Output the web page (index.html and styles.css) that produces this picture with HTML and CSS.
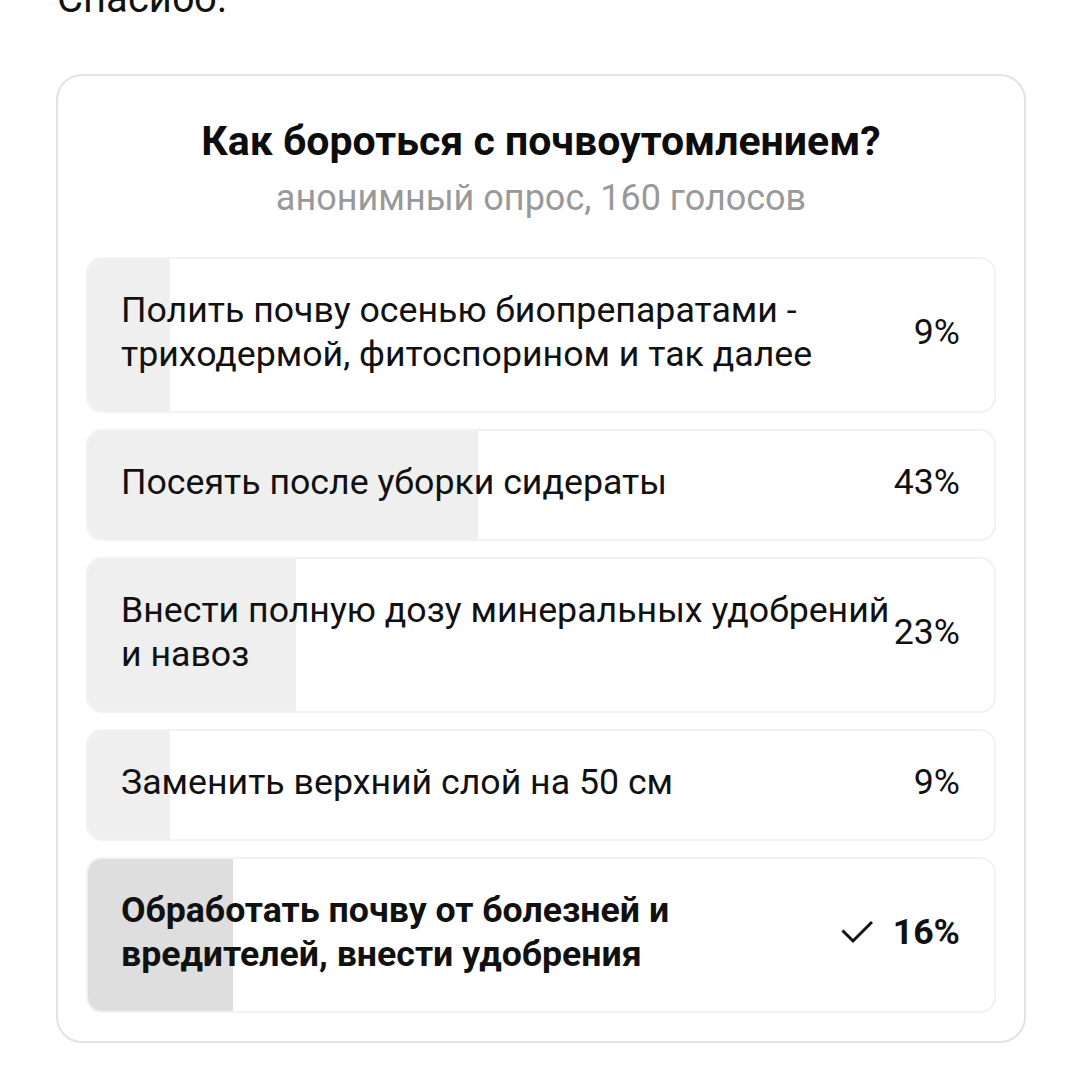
FILE: index.html
```html
<!DOCTYPE html>
<html lang="ru">
<head>
<meta charset="utf-8">
<link rel="stylesheet" href="styles.css">
</head>
<body>
<p class="thanks">Спасибо.</p>
<div class="poll">
  <div class="poll-head">
    <h2 class="poll-title">Как бороться с почвоутомлением?</h2>
    <div class="poll-sub">анонимный опрос, 160 голосов</div>
  </div>
  <div class="options">
    <div class="option">
      <div class="fill" style="width:9%"></div>
      <div class="opt-text">Полить почву осенью биопрепаратами - триходермой, фитоспорином и так далее</div>
      <div class="opt-pct">9%</div>
    </div>
    <div class="option">
      <div class="fill" style="width:43%"></div>
      <div class="opt-text">Посеять после уборки сидераты</div>
      <div class="opt-pct">43%</div>
    </div>
    <div class="option">
      <div class="fill" style="width:23%"></div>
      <div class="opt-text">Внести полную дозу минеральных удобрений и навоз</div>
      <div class="opt-pct">23%</div>
    </div>
    <div class="option">
      <div class="fill" style="width:9%"></div>
      <div class="opt-text">Заменить верхний слой на 50 см</div>
      <div class="opt-pct">9%</div>
    </div>
    <div class="option selected">
      <div class="fill" style="width:16%"></div>
      <div class="opt-text">Обработать почву от болезней и вредителей, внести удобрения</div>
      <div class="opt-pct"><svg class="check" width="32" height="24" viewBox="0 0 32 24"><path d="M1.5 10.5 L12 21 L31 2" fill="none" stroke="#111" stroke-width="3"/></svg>16%</div>
    </div>
  </div>
</div>
</body>
</html>
```

FILE: styles.css
```css
* { box-sizing: border-box; }
html, body { margin: 0; padding: 0; background: #fff; }
body {
  font-family: Roboto, "Noto Sans", sans-serif;
  color: #111;
  height: 1072px;
  overflow: hidden;
}
.thanks {
  margin: -25px 0 0 57px;
  font-size: 40px;
  line-height: 48px;
  color: #111;
}
.poll {
  margin: 51px 0 0 56px;
  width: 970px;
  border: 2px solid #e3e3e3;
  border-radius: 26px;
  padding: 28px 28px 28px;
}
.poll-head {
  text-align: center;
  padding: 13px 0 37px;
}
.poll-title {
  margin: 0;
  font-size: 41px;
  font-weight: 700;
  line-height: 48px;
  color: #0d0d0d;
}
.poll-sub {
  margin-top: 11px;
  font-size: 36px;
  line-height: 44px;
  color: #999;
}
.options {
  display: flex;
  flex-direction: column;
  gap: 16px;
}
.option {
  position: relative;
  display: flex;
  align-items: center;
  gap: 0;
  border: 2px solid #f2f2f2;
  border-radius: 16px;
  padding: 29px 34px 35px 33px;
  overflow: hidden;
  font-size: 35.7px;
  line-height: 44px;
}
.fill {
  position: absolute;
  left: 0; top: 0; bottom: 0;
  background: #efefef;
}
.selected .fill { background: #dedede; }
.opt-text {
  position: relative;
  flex: 1;
  color: #111;
}
.opt-pct {
  position: relative;
  flex: none;
  display: flex;
  align-items: center;
  gap: 20px;
  color: #111;
}
.selected .opt-text, .selected .opt-pct { font-weight: 700; }
.selected .opt-text { padding-right: 40px; }
.check { display: block; }
```
